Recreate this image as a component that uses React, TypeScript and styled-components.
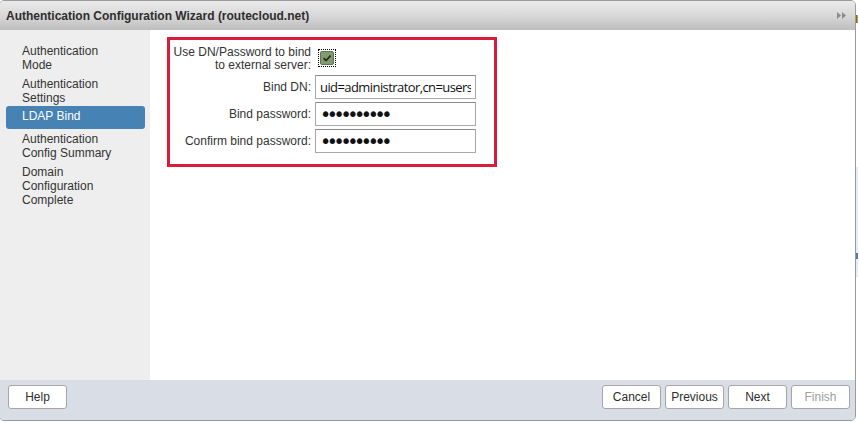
import React from 'react';
import styled, { createGlobalStyle } from 'styled-components';

const GlobalStyle = createGlobalStyle`
  html, body {
    margin: 0;
    padding: 0;
    background: #ffffff;
  }
  body {
    font-family: 'Liberation Sans', Arial, sans-serif;
    font-size: 12px;
    color: #333333;
  }
`;

const Page = styled.div`
  display: flex;
  width: 859px;
  height: 423px;
  overflow: hidden;
`;

const Window = styled.div`
  margin-left: -1px;
  width: 857px;
  height: 421px;
  flex-shrink: 0;
  box-sizing: border-box;
  border: 1px solid #9b9b9b;
  border-radius: 5px;
  display: flex;
  flex-direction: column;
  overflow: hidden;
`;

const TitleBar = styled.div`
  height: 29px;
  flex-shrink: 0;
  display: flex;
  align-items: center;
  justify-content: space-between;
  padding: 0 8px 0 6px;
  background: linear-gradient(to bottom, #ebebeb 0%, #d6d6d6 55%, #bebebe 100%);
`;

const Title = styled.h1`
  margin: 0;
  font-size: 12px;
  font-weight: bold;
  color: #2e2e2e;
`;

const Body = styled.div`
  flex: 1;
  display: flex;
  min-height: 0;
`;

const Sidebar = styled.nav`
  width: 150px;
  flex-shrink: 0;
  background: #eeeeee;
  padding-top: 12px;
  box-sizing: border-box;
  display: flex;
  flex-direction: column;
`;

const NavItem = styled.div<{ active?: boolean }>`
  margin: ${(p) => (p.active ? '-2px 5px 1px 6px' : '0 5px 0 6px')};
  padding: ${(p) => (p.active ? '3px 8px 6px 16px' : '2px 8px 3px 16px')};
  line-height: 14px;
  border-radius: 3px;
  background: ${(p) => (p.active ? '#4682b4' : 'transparent')};
  color: ${(p) => (p.active ? '#ffffff' : '#333333')};
`;

const Content = styled.main`
  flex: 1;
  background: #ffffff;
  padding: 7px 0 0 17px;
`;

const Highlight = styled.div`
  width: 330px;
  height: 130px;
  box-sizing: border-box;
  border: 3px solid #dc1a3b;
  padding-top: 6px;
`;

const FormGrid = styled.div`
  display: grid;
  grid-template-columns: 141px 161px;
  column-gap: 4px;
  row-gap: 3px;
`;

const Label = styled.label<{ multiline?: boolean }>`
  text-align: right;
  line-height: 13px;
  align-self: ${(p) => (p.multiline ? 'start' : 'center')};
  color: #333333;
`;

const CheckFocus = styled.span`
  width: 18px;
  height: 18px;
  box-sizing: border-box;
  margin: 3px 0 0 3px;
  outline: 1px dotted #000000;
  outline-offset: -1px;
  display: flex;
  align-items: center;
  justify-content: center;
`;

const CheckBox = styled.span`
  width: 14px;
  height: 14px;
  box-sizing: border-box;
  border: 1px solid #5d7551;
  border-radius: 2px;
  background: #7f9d6e;
  display: flex;
  align-items: center;
  justify-content: center;
`;

const TextInput = styled.input`
  width: 161px;
  height: 24px;
  box-sizing: border-box;
  margin: 0;
  padding: 0 4px;
  border: 1px solid #a9a9a9;
  border-top-color: #8a8a8a;
  border-radius: 0;
  background: #ffffff;
  font-family: 'Open Sans', 'Liberation Sans', sans-serif;
  font-size: 13px;
  letter-spacing: -0.58px;
  color: #111111;
  outline: none;
`;

const PasswordInput = styled(TextInput)`
  font-family: 'DejaVu Sans', sans-serif;
  font-size: 19px;
  letter-spacing: -4.4px;
  padding-left: 4px;
`;

const Footer = styled.footer`
  height: 40px;
  flex-shrink: 0;
  box-sizing: border-box;
  background: #d9dee6;
  padding: 5px 5px 0 8px;
  display: flex;
  justify-content: space-between;
  align-items: flex-start;
`;

const ButtonGroup = styled.div`
  display: flex;
  gap: 4px;
`;

const Button = styled.button`
  width: 59px;
  height: 24px;
  box-sizing: border-box;
  margin: 0;
  padding: 0;
  border: 1px solid #a6a6a6;
  border-radius: 3px;
  background: #ffffff;
  font-family: 'Liberation Sans', Arial, sans-serif;
  font-size: 12px;
  color: #2e2e2e;

  &:disabled {
    color: #a0a0a0;
  }
`;

const Backdrop = styled.div`
  flex: 1;
  display: flex;
  flex-direction: column;
  padding-top: 15px;
`;

const BackdropMark = styled.span`
  width: 2px;
  height: 8px;
  background: linear-gradient(to right, #5a5040, #e0b030);
`;

const BackdropPanel = styled.span`
  margin-top: 144px;
  width: 2px;
  height: 110px;
  background: #e6edf5;
  display: flex;
  flex-direction: column;
  justify-content: flex-end;
  padding-bottom: 18px;
  box-sizing: border-box;
`;

const BackdropTick = styled.span`
  width: 2px;
  height: 6px;
  background: #3f7fc4;
`;

const DoubleArrow = () => (
  <svg width="10" height="7" viewBox="0 0 10 7" aria-hidden="true">
    <polygon points="0,0 4,3.5 0,7" fill="#8c8c8c" />
    <polygon points="5,0 9,3.5 5,7" fill="#8c8c8c" />
  </svg>
);

const Check = () => (
  <svg width="10" height="8" viewBox="0 0 10 8" aria-hidden="true">
    <path d="M1.5 4.2 L4 6.5 L8.6 1.6" fill="none" stroke="#2a2a2a" strokeWidth="1.8" />
  </svg>
);

const steps = [
  { label: 'Authentication Mode' },
  { label: 'Authentication Settings' },
  { label: 'LDAP Bind', active: true },
  { label: 'Authentication Config Summary' },
  { label: 'Domain Configuration Complete' },
];

const stepLines: Record<string, string[]> = {
  'Authentication Mode': ['Authentication', 'Mode'],
  'Authentication Settings': ['Authentication', 'Settings'],
  'LDAP Bind': ['LDAP Bind'],
  'Authentication Config Summary': ['Authentication', 'Config Summary'],
  'Domain Configuration Complete': ['Domain', 'Configuration', 'Complete'],
};

export default function App() {
  return (
    <>
      <GlobalStyle />
      <Page>
        <Window>
          <TitleBar>
            <Title>Authentication Configuration Wizard (routecloud.net)</Title>
            <DoubleArrow />
          </TitleBar>
          <Body>
            <Sidebar>
              {steps.map((s) => (
                <NavItem key={s.label} active={s.active}>
                  {stepLines[s.label].map((line, i) => (
                    <div key={i}>{line}</div>
                  ))}
                </NavItem>
              ))}
            </Sidebar>
            <Content>
              <Highlight>
                <FormGrid>
                  <Label multiline>
                    Use DN/Password to bind
                    <br />
                    to external server:
                  </Label>
                  <div>
                    <CheckFocus>
                      <CheckBox>
                        <Check />
                      </CheckBox>
                    </CheckFocus>
                  </div>
                  <Label>Bind DN:</Label>
                  <TextInput defaultValue="uid=administrator,cn=users,dc=routecloud,dc=net" />
                  <Label>Bind password:</Label>
                  <PasswordInput type="password" defaultValue="secretpass" />
                  <Label>Confirm bind password:</Label>
                  <PasswordInput type="password" defaultValue="secretpass" />
                </FormGrid>
              </Highlight>
            </Content>
          </Body>
          <Footer>
            <Button>Help</Button>
            <ButtonGroup>
              <Button>Cancel</Button>
              <Button>Previous</Button>
              <Button>Next</Button>
              <Button disabled>Finish</Button>
            </ButtonGroup>
          </Footer>
        </Window>
        <Backdrop>
          <BackdropMark />
          <BackdropPanel>
            <BackdropTick />
          </BackdropPanel>
        </Backdrop>
      </Page>
    </>
  );
}
